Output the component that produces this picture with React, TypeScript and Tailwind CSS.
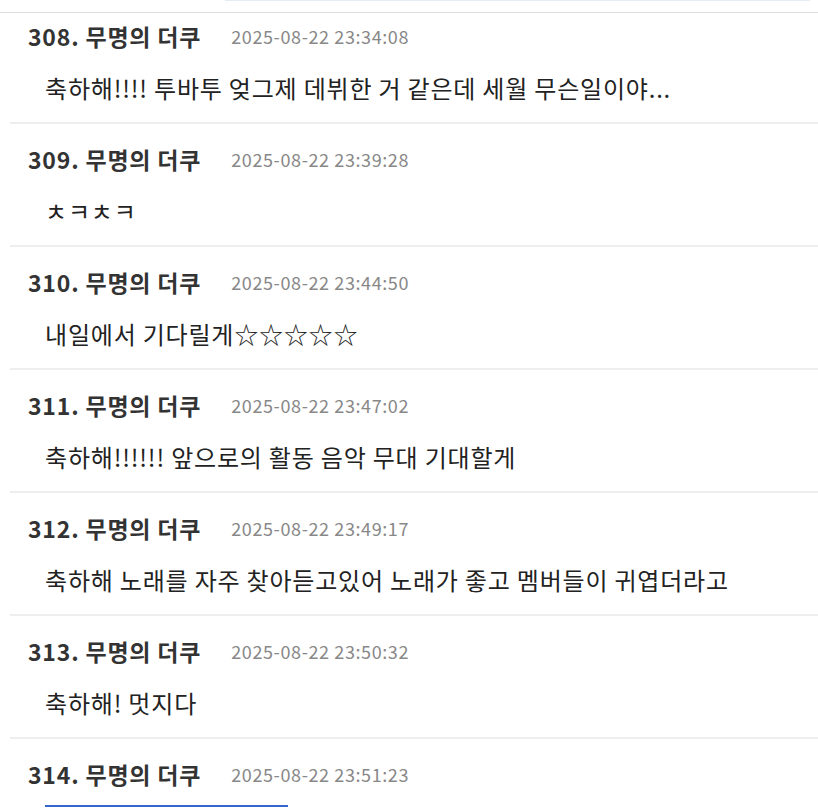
import React from "react";

type Comment = { no: number; time: string; text: string };

const comments: Comment[] = [
  { no: 308, time: "2025-08-22 23:34:08", text: "축하해!!!! 투바투 엊그제 데뷔한 거 같은데 세월 무슨일이야..." },
  { no: 309, time: "2025-08-22 23:39:28", text: "ㅊㅋㅊㅋ" },
  { no: 310, time: "2025-08-22 23:44:50", text: "내일에서 기다릴게☆☆☆☆☆" },
  { no: 311, time: "2025-08-22 23:47:02", text: "축하해!!!!!! 앞으로의 활동 음악 무대 기대할게" },
  { no: 312, time: "2025-08-22 23:49:17", text: "축하해 노래를 자주 찾아듣고있어 노래가 좋고 멤버들이 귀엽더라고" },
  { no: 313, time: "2025-08-22 23:50:32", text: "축하해! 멋지다" },
];

const font = { fontFamily: '"Noto Sans CJK KR", "Noto Sans", sans-serif' };

function Header({ c }: { c: Comment }) {
  return (
    <div className="flex items-center h-[28px] pl-[18px]">
      <span className="text-[23px] font-bold text-[#333] leading-[28px] tracking-[0.8px]">
        {c.no}. 무명의 더쿠
      </span>
      <span className="ml-[30px] text-[18px] text-[#888] leading-[28px] tracking-[0.6px]">{c.time}</span>
    </div>
  );
}

export default function App() {
  return (
    <div className="w-[818px] h-[809px] bg-white overflow-hidden" style={font}>
      <div className="ml-[225px] w-[585px] h-px bg-[#e6ecf7]" />
      <div className="mt-[11px] border-t border-[#dddddd]">
        {comments.map((c, i) => (
          <div
            key={c.no}
            className={
              "ml-[10px] border-b-2 border-[#eeeeee] pb-[20px] " + (i === 0 ? "pt-[9px]" : "pt-[21px]")
            }
          >
            <Header c={c} />
            <div className="mt-[24px] pl-[35px] text-[24px] text-[#222] leading-[28px] tracking-[0.8px] whitespace-nowrap">
              {c.text}
            </div>
          </div>
        ))}
        <div className="ml-[10px] pt-[21px]">
          <Header c={{ no: 314, time: "2025-08-22 23:51:23", text: "" }} />
          <div className="mt-[17px] ml-[35px] w-[243px] h-[2px] bg-[#3366cc]" />
        </div>
      </div>
    </div>
  );
}
